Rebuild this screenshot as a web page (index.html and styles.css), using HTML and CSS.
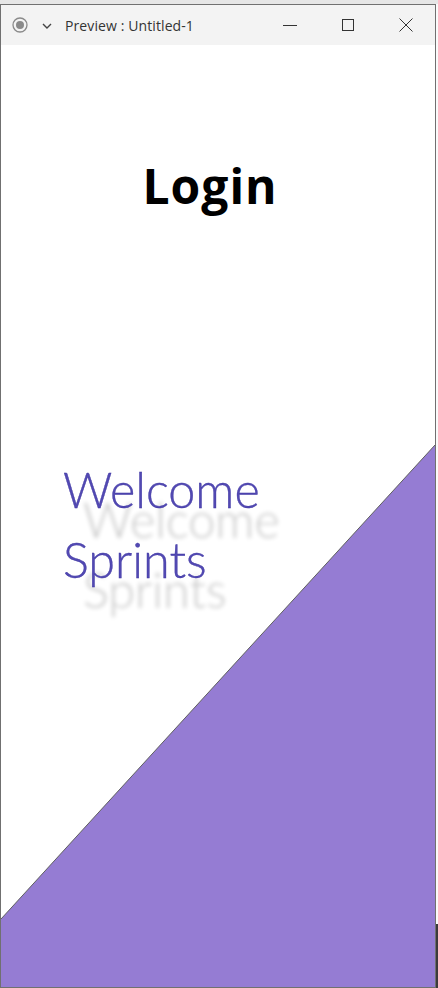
FILE: index.html
```html
<!DOCTYPE html>
<html>
<head>
<meta charset="utf-8">
<link rel="stylesheet" href="styles.css">
</head>
<body>
<div class="window">
  <div class="titlebar">
    <div class="tb-left">
      <svg class="rec" width="16" height="16" viewBox="0 0 16 16"><circle cx="8" cy="8" r="7" fill="none" stroke="#8a8a8a" stroke-width="1.3"/><circle cx="8" cy="8" r="4" fill="#8a8a8a"/></svg>
      <svg class="chev" width="10" height="6" viewBox="0 0 10 6"><path d="M1 1 L5 5 L9 1" fill="none" stroke="#444" stroke-width="1.4"/></svg>
      <span class="title">Preview : Untitled-1</span>
    </div>
    <div class="tb-controls">
      <span class="ctl"><svg width="14" height="14" viewBox="0 0 14 14"><path d="M0 7.5 H14" stroke="#333" stroke-width="1"/></svg></span>
      <span class="ctl"><svg width="12" height="12" viewBox="0 0 12 12"><rect x="0.5" y="0.5" width="11" height="11" fill="none" stroke="#333" stroke-width="1"/></svg></span>
      <span class="ctl"><svg width="14" height="14" viewBox="0 0 14 14"><path d="M0.5 0.5 L13.5 13.5 M13.5 0.5 L0.5 13.5" stroke="#333" stroke-width="1"/></svg></span>
    </div>
  </div>
  <div class="content">
    <svg class="shape" width="434" height="942" viewBox="0 0 434 942"><polygon points="434,400 434,942 0,942 0,874" fill="#957cd3"/><line x1="434" y1="400" x2="0" y2="874" stroke="#5f5f5f" stroke-width="1"/></svg>
    <h1 class="login">Login</h1>
    <div class="welcome">
      <div class="wline">Welcome</div>
      <div class="wline">Sprints</div>
    </div>
  </div>
</div>
</body>
</html>
```
FILE: styles.css
```css
html, body {
  margin: 0;
  padding: 0;
}
body {
  width: 438px;
  height: 988px;
  overflow: hidden;
  background: linear-gradient(to bottom, #e6e6e6 0 4px, #fafafa 4px 924px, #3c3a3c 924px);
  font-family: "Open Sans", "Noto Sans", sans-serif;
}
.window {
  width: 436px;
  height: 984px;
  margin-top: 4px;
  box-sizing: border-box;
  border: 1px solid #707070;
  display: flex;
  flex-direction: column;
}
.titlebar {
  height: 40px;
  flex: none;
  background: #f3f3f3;
  display: flex;
  align-items: center;
  justify-content: space-between;
}
.tb-left {
  display: flex;
  align-items: center;
}
.rec {
  margin-left: 11px;
}
.chev {
  margin-left: 14px;
  margin-top: 1px;
}
.title {
  margin-left: 13px;
  font-family: "Open Sans", sans-serif;
  font-size: 14px;
  color: #333;
  letter-spacing: 0.1px;
}
.tb-controls {
  display: flex;
  align-items: center;
  margin-right: 22px;
}
.ctl {
  display: flex;
  align-items: center;
  justify-content: center;
  width: 14px;
  height: 14px;
  margin-left: 44px;
}
.ctl:first-child { margin-left: 0; }
.content {
  flex: 1;
  background: #fff;
  position: relative;
  display: flex;
  flex-direction: column;
}
.shape {
  position: absolute;
  left: 0;
  top: 0;
}
.login {
  position: relative;
  margin: 0;
  padding-top: 108px;
  padding-right: 16px;
  text-align: center;
  font-family: "Open Sans", sans-serif;
  font-weight: 700;
  font-size: 48px;
  line-height: 66px;
  letter-spacing: 1px;
  color: #000;
}
.welcome {
  position: relative;
  margin-top: 235px;
  padding-left: 62px;
  font-family: "Lato", sans-serif;
  font-weight: 300;
  font-size: 48.5px;
  line-height: 70px;
  color: #5249b2;
  -webkit-text-stroke: 0.35px #3a32a0;
  text-shadow: 20px 30px 4px rgba(0, 0, 0, 0.22);
}
```
